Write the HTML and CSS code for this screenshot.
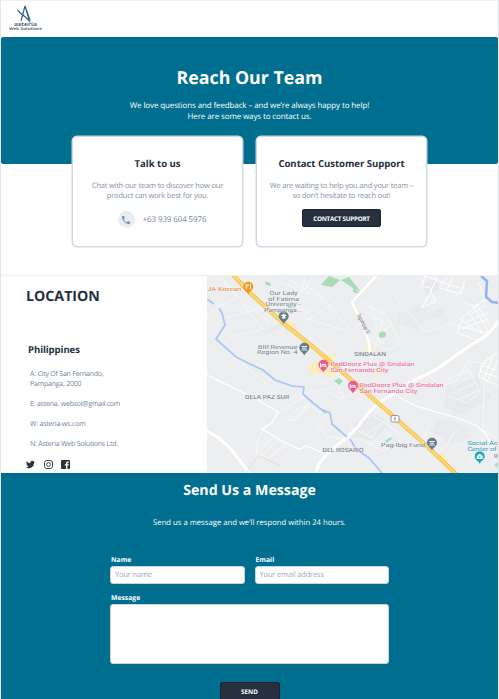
FILE: index.html
```html
<!DOCTYPE html>
<html lang="en">
<head>
<meta charset="utf-8">
<title>Asteria Web Solutions – Contact</title>
<link rel="stylesheet" href="styles.css">
</head>
<body>
<header class="topbar">
  <svg class="logo" width="34" height="27" viewBox="0 0 34 27">
    <path d="M16 1 12 16M16 1l4.500 15-7.500-7M8.500 5l6 6" fill="none" stroke="#2f6385" stroke-width="1.200"/>
    <path d="M17 2l5 14-3-4z" fill="#3b6686"/>
    <text x="5" y="21" font-size="5.500" font-weight="600" textLength="23" lengthAdjust="spacingAndGlyphs">asteria</text>
    <text x="0" y="25.300" font-size="4" font-weight="600" textLength="33" lengthAdjust="spacingAndGlyphs">Web Solutions</text>
  </svg>
</header>
<main>
  <section class="hero">
    <h1>Reach Our Team</h1>
    <p>We love questions and feedback – and we’re always happy to help!<br>Here are some ways to contact us.</p>
  </section>
  <section class="cards">
    <article class="card">
      <h2>Talk to us</h2>
      <p>Chat with our team to discover how our<br>product can work best for you.</p>
      <div class="phone">
        <span class="phone-icon"><svg width="10" height="10" viewBox="3 3 18 18"><path fill="#7c93aa" d="M6.620 10.790c1.440 2.830 3.760 5.140 6.590 6.590l2.200-2.200c.27-.27.67-.36 1.020-.24 1.120.37 2.330.57 3.570.57.550 0 1 .45 1 1V20c0 .55-.45 1-1 1-9.390 0-17-7.610-17-17 0-.55.45-1 1-1h3.500c.55 0 1 .45 1 1 0 1.250.2 2.450.57 3.570.11.350.03.740-.25 1.020z"/></svg></span>
        <span>+63 939 604 5976</span>
      </div>
    </article>
    <article class="card">
      <h2>Contact Customer Support</h2>
      <p>We are waiting to help you and your team –<br>so don’t hesitate to reach out!</p>
      <button class="btn support">CONTACT SUPPORT</button>
    </article>
  </section>
  <section class="location">
    <div class="info">
      <h2>LOCATION</h2>
      <h3>Philippines</h3>
      <address>
        <p>A: City Of San Fernando,<br>Pampanga, 2000</p>
        <p>E: asteria. websol@gmail.com</p>
        <p>W: asteria-ws.com</p>
        <p>N: Asteria Web Solutions Ltd.</p>
      </address>
      <div class="social">
        <svg width="9" height="9" viewBox="0 2 24 20"><path fill="#243342" d="M24 4.600a10 10 0 0 1-2.800.8 5 5 0 0 0 2.100-2.700 10 10 0 0 1-3.100 1.200 4.900 4.900 0 0 0-8.400 4.500A14 14 0 0 1 1.700 3.200a4.900 4.900 0 0 0 1.500 6.500 5 5 0 0 1-2.200-.6 4.900 4.900 0 0 0 4 4.900 5 5 0 0 1-2.300.1 4.900 4.900 0 0 0 4.600 3.400A10 10 0 0 1 0 19.500 14 14 0 0 0 21.500 7.100 10 10 0 0 0 24 4.600z"/></svg>
        <svg width="9" height="9" viewBox="0 0 9 9" fill="none" stroke="#243342"><rect x=".5" y=".5" width="8" height="8" rx="2.300" stroke-width=".9"/><circle cx="4.500" cy="4.500" r="1.900" stroke-width=".9"/><circle cx="6.900" cy="2.100" r=".4" fill="#243342" stroke="none"/></svg>
        <svg width="9" height="9" viewBox="0 0 9 9"><path fill="#243342" d="M1 0h7a1 1 0 0 1 1 1v7a1 1 0 0 1-1 1H6.400V5.600h1.200l.2-1.400H6.400v-.8c0-.5.200-.7.700-.7h.7V1.500h-1C5.500 1.500 5 2.200 5 3.200v1H3.800v1.400H5V9H1a1 1 0 0 1-1-1V1a1 1 0 0 1 1-1z"/></svg>
      </div>
    </div>
    <svg class="map" width="291" height="197" viewBox="207 276 291 197">
      <defs>
        <path id="pin" d="M0 6.500C-1 3.500-5 2.500-5-1.200a5 5 0 0 1 10 0C5 2.500 1 3.500 0 6.500z"/>
      </defs>
      <rect x="207" y="276" width="292" height="197" fill="#eceef0"/>
      <g fill="#e7e9ec">
        <path d="M262 331l24-11 4 4-24 11zM284 328l12-4 3 5-12 5zM398 315l20-9 12 7 16-8-6 12-15 4-9 9-18-7zM421 285l14-6 7 9-14 8zM355 423l22-9 15 12-18 15-22-4zM447 385l30-8 14 20-30 18-17-9zM438 418l22 5 12 15-22 6-18-13z"/>
      </g>
      <g fill="#a9dbb9">
        <path d="M329 276l11 4-8 7-11-2zM341 280l8-3 12 15-8-4zM353 287l7 7-7-2z"/>
        <ellipse cx="381.500" cy="334.500" rx="4.500" ry="3.300"/>
        <path d="M334 381l5-3 4 3-4 4zM265 281l5 2 1 3-5-1zM287 305l5-1v4h-4zM385 441l6-4 1 2-6 4zM494 465l5-3v6z"/>
      </g>
      <g fill="#fbeebd">
        <path d="M286 318l9 6 2 6-8-1zM309 365l16-8 14 12-5 9-13-4-12-1zM328 352l9 5-4 6-7-4zM354 309l6 3 2 8-6-3zM366 345l8-1v8l-7-1zM438 457l5-5 7 12-4 4zM374 371l12-3-8 9z"/>
      </g>
      <g fill="none" stroke="#f9fafb" stroke-width=".8">
        <path d="M270 287l20 13 16-13M277 280l24 11 5-15M282 276l23 13-13 14 15 10 17-16-19-12M294 304l14 16 28-18M306 291l11 5M313 276l-8 13M219 276l26 28 25 18M207 314l30-17-12-15M222 319l52-15M229 337l34-8-20-24M310 320l34 10M318 294l34 37 12-11M297 350l14-12 41 36M228 352l46 38M322 384l32-22"/>
        <path d="M360 301l26 14 15 29-15 6-20-12M366 312l18 10M372 307l8 36M384 318l-8 23M390 326l-19 12M376 276l20 21 29 35 29-9"/>
        <path stroke="#fff" stroke-width="1" d="M425 276l-3 10 8 2 5 14-13 5M437 278l-11 23M437 301l-7-8-8 14M425 276l34 12M447 276l-8 12 22 6 4-14M453 276l-6 14M465 286l-9 10M478 281l7 18-22 18-6 16 22 8 9-10-15-25M476 304l14 21M467 310l15 22M460 319l23 15M463 302l11 4 16-7M454 325l32 8M472 314l13-9M466 322l22-9M462 329l26-10"/>
        <path stroke="#fff" stroke-width="1" d="M499 351l-18 14-2 12 20 9M488 357l-8 14 19 7M494 353l-10 26M499 359l-13 24M481 365l18 6"/>
        <path d="M263 430l-5 9-2 14M256 454l18-17 12 9-18 13M260 457l19-18M265 460l20-16M287 419l14-13 6 2-12 13zM291 421l14-13M298 417l12-11M278 413l32-21 23-4M312 407l8 7M340 376l9 12 9-4M336 383l8 16 14-8M330 393l12 6M317 423l10 14 12 1"/>
        <path d="M350 426l21 12 14-18 17 20-19 11-22-12M360 440l21-17M369 446l20-20M362 431l27 17M374 416l25 17M412 380l14-6 15 12 16-5 11-20 20 3M431 424l-8 14 21 12 10-18M445 380l24-10 11 22-13 11-21-8M452 387l17-9M454 393l21-10M460 399l19-9M484 385l-1 45 16 10M487 430l-19 37"/>
      </g>
      <g fill="none" stroke="#fff" stroke-linecap="round">
        <path stroke-width="1.300" d="M207 375l49 24 22 13-6 11-10 6 20 12 17 8 8-3 20 9M397 396l18 10 40 11 22 9 10 9 6 17"/>
        <path stroke-width="2.500" d="M377 275l-25 27 9 20c6 13 9 19 9 34v12"/>
        <path stroke-width="3" d="M207 431c20 10 27 22 42 42"/>
        <path stroke-width="3.200" d="M316 473c2-11 8-16 17-24l20-17c12-13 13-19 26-29l31-20c12-8 24-10 35-20l26-18c15-8 21-14 28-25"/>
      </g>
      <path d="M246 473l12-17 22 9" fill="none" stroke="#eedadc"/>
      <g fill="none" stroke="#a9c5f5" stroke-width="1.700" stroke-linejoin="round">
        <path d="M207 299l7 5M219 308l3 5 3 12-9 14 10 9 10 9 14 7 13 6 12 10 17 6 12 1-1 7 10 9 13 10M321 409l9 4 2 11 15 13M350 439l6 10 13 9 13 15"/>
        <path stroke-width="2.500" stroke="#8db4f7" d="M481 276l6 5-1 16 6 5 7 1"/>
      </g>
      <path d="M233 275l17 18 33 30 29 23 36 31 45 39 36 32 28 27" fill="none" stroke="#f5bf45" stroke-width="4.200"/>
      <path d="M233 275l17 18 33 30 29 23 36 31 45 39 36 32 28 27" fill="none" stroke="#ffd772" stroke-width="2.400"/>
      <rect x="391" y="415.500" width="8" height="6.500" rx="1.500" fill="#fff" stroke="#777d84" stroke-width=".8"/>
      <path d="M395 417v3.500" stroke="#555" stroke-width=".8"/>
      <g>
        <use href="#pin" x="248.300" y="288" fill="#f29a1f"/>
        <path d="M246.500 284v5M248 284v2h-3M250.500 284v5" stroke="#fff" stroke-width=".9" fill="none"/>
        <use href="#pin" x="283.700" y="317.500" fill="#647b8c"/>
        <path d="M280.500 315.500l3.200-1.700 3.200 1.700-3.200 1.800zM282 317v1.500h3.500V317" fill="#fff"/>
        <use href="#pin" x="304.300" y="349" fill="#647b8c"/>
        <path d="M301.500 346.500h5.600M302 348.200h4.600M301.500 350h5.600" stroke="#fff" stroke-width=".9"/>
        <use href="#pin" x="323.500" y="366" fill="#ee5a94"/>
        <path d="M320.700 363v4.500M320.700 366h5.600v1.500M322 364.500h4" stroke="#fff" fill="none"/>
        <use href="#pin" x="353" y="387" fill="#ee5a94"/>
        <path d="M350.200 384v4.500M350.200 387h5.600v1.500M351.500 385.500h4" stroke="#fff" fill="none"/>
        <use href="#pin" x="432" y="444" fill="#647b8c"/>
        <path d="M429.300 441.500h5.400M430 443.200h4M429.300 445h5.400" stroke="#fff" stroke-width=".9"/>
        <use href="#pin" x="479.700" y="457.500" fill="#19acc0"/>
        <path d="M476.800 456l3-2.300 2.900 2.300v3h-5.800z" fill="#fff"/>
        <circle cx="479.700" cy="457" r=".8" fill="#19acc0"/>
      </g>
      <g class="labels">
        <g fill="#e98b38"><text x="207.300" y="291" textLength="34" lengthAdjust="spacingAndGlyphs">JA Korean</text></g>
        <g fill="#74808c">
          <text x="269.500" y="294.500" textLength="28" lengthAdjust="spacingAndGlyphs">Our Lady</text>
          <text x="268" y="300.500" textLength="31" lengthAdjust="spacingAndGlyphs">of Fatima</text>
          <text x="265.500" y="306" textLength="35" lengthAdjust="spacingAndGlyphs">University -</text>
          <text x="264" y="311.500" textLength="38" lengthAdjust="spacingAndGlyphs">Pampanga...</text>
          <text x="258" y="348.500" textLength="39.500" lengthAdjust="spacingAndGlyphs">BIR Revenue</text>
          <text x="257" y="354" textLength="40.500" lengthAdjust="spacingAndGlyphs">Region No. 4</text>
          <text x="381" y="446.500" textLength="44" lengthAdjust="spacingAndGlyphs">Pag-Ibig Fund</text>
        </g>
        <g fill="#ec5c91">
          <text x="330.500" y="366" textLength="84" lengthAdjust="spacingAndGlyphs">RedDoorz Plus @ Sindalan</text>
          <text x="330.500" y="371.500" textLength="58" lengthAdjust="spacingAndGlyphs">San Fernando City</text>
          <text x="359.500" y="387" textLength="84" lengthAdjust="spacingAndGlyphs">RedDoorz Plus @ Sindalan</text>
          <text x="359.500" y="392.500" textLength="58" lengthAdjust="spacingAndGlyphs">San Fernando City</text>
        </g>
        <g fill="#686e74">
          <text x="354" y="356" textLength="32" lengthAdjust="spacingAndGlyphs">SINDALAN</text>
          <text x="245" y="398.500" textLength="44" lengthAdjust="spacingAndGlyphs">DELA PAZ SUR</text>
          <text x="322.500" y="451.500" textLength="41" lengthAdjust="spacingAndGlyphs">DEL ROSARIO</text>
          <text x="494" y="458">R</text>
          <text transform="translate(356.500 315) rotate(62)" font-size="4.500" textLength="22" lengthAdjust="spacingAndGlyphs">Tagumpay St</text>
        </g>
        <g fill="#269fae">
          <text x="467.500" y="445" textLength="30" lengthAdjust="spacingAndGlyphs">Social Ac</text>
          <text x="467.500" y="451" textLength="29" lengthAdjust="spacingAndGlyphs">Center of</text>
        </g>
      </g>
    </svg>
  </section>
  <section class="message">
    <h2>Send Us a Message</h2>
    <p>Send us a message and we’ll respond within 24 hours.</p>
    <form>
      <label>Name<input type="text" placeholder="Your name"></label>
      <label>Email<input type="text" placeholder="Your email address"></label>
      <label class="wide">Message<textarea></textarea></label>
      <button class="btn send" type="button">SEND</button>
    </form>
  </section>
</main>
</body>
</html>
```
FILE: styles.css
```css
* { box-sizing: border-box; }
html { overflow: hidden; }
body {
  margin: 0;
  height: 699px;
  overflow: hidden;
  border: 1px solid #e4e6e8;
  border-top-color: #f0f0f0;
  border-bottom: 0;
  background: #fff;
  color: #243040;
  font-family: "Open Sans", sans-serif;
  text-rendering: geometricPrecision;
}
h1, h2, h3, p { margin: 0; }
.topbar { height: 36px; padding: 4px 0 0 8px; }
.logo { display: block; fill: #3c4d5f; }
.hero {
  height: 127px;
  padding-top: 29px;
  background: #006e8e;
  border-radius: 2px;
  color: #fff;
  text-align: center;
}
.hero h1 { font-size: 17.800px; line-height: 24px; font-weight: 700; }
.hero p { margin-top: 10px; font-size: 8px; line-height: 11px; letter-spacing: -.12px; }
.cards {
  display: flex;
  justify-content: center;
  gap: 13px;
  margin-top: -28px;
}
.card {
  width: 171px;
  height: 111px;
  padding-top: 19px;
  border: 1.500px solid #cfd8e5;
  border-radius: 5px;
  background: #fff;
  text-align: center;
  box-shadow: 0 0 0 .5px #cfd8e5;
}
.card h2 { font-size: 9.600px; line-height: 15px; font-weight: 700; letter-spacing: -.05px; }
.card p { margin-top: 10px; font-size: 7.500px; line-height: 10px; letter-spacing: -.19px; color: #8392a5; }
.phone {
  display: flex;
  align-items: center;
  justify-content: center;
  gap: 8px;
  margin-top: 10px;
  padding-left: 9px;
  font-size: 8px;
  letter-spacing: -.12px;
  color: #74859a;
}
.phone-icon {
  display: grid;
  place-items: center;
  width: 17px;
  height: 17px;
  border-radius: 50%;
  background: #e9edf3;
}
.phone-icon svg { width: 8px; height: 8px; }
.btn {
  display: block;
  padding: 0;
  border: 1px solid #1b2533;
  border-radius: 2px;
  background: #27303e;
  color: #fff;
  font: 700 6.300px "Open Sans", sans-serif;
  text-rendering: inherit;
}
.support { width: 79px; height: 18px; margin: 8px auto 0; letter-spacing: -.26px; }
.location {
  display: flex;
  height: 198px;
  margin-top: 28px;
  border-top: 1px solid #eceff1;
}
.info { width: 206px; padding: 11px 0 0 25px; }
.info h2 { font-size: 14.200px; line-height: 20px; font-weight: 700; }
.info h3 { margin: 36px 0 0 2px; font-size: 9.600px; line-height: 14px; font-weight: 700; letter-spacing: -.1px; }
address { margin: 13px 0 0 4px; font-style: normal; font-size: 7px; line-height: 10px; letter-spacing: -.22px; color: #71839a; }
address p + p { margin-top: 10px; }
.social { display: flex; gap: 8.500px; margin-top: 10px; }
.map { display: block; flex: none; }
.labels text { font-family: Roboto, sans-serif; font-size: 5.800px; stroke: #f4f5f6; stroke-width: .6px; paint-order: stroke; }
.message { height: 226px; padding-top: 7px; background: #006e8e; color: #fff; text-align: center; }
.message h2 { font-size: 14.200px; line-height: 22px; font-weight: 700; }
.message p { margin-top: 15px; font-size: 7.700px; line-height: 12px; }
form {
  display: grid;
  grid-template-columns: 134.500px 134.500px;
  column-gap: 10px;
  width: 279px;
  margin: 25px auto 0;
  text-align: left;
}
label { display: block; font-size: 6.800px; line-height: 12px; font-weight: 700; text-indent: 1px; }
input, textarea {
  display: block;
  width: 100%;
  height: 18px;
  margin-top: 0;
  padding: 0 4px;
  border: 1px solid #c8d5e2;
  border-radius: 3px;
  background: #fff;
  font: 7.500px "Open Sans", sans-serif;
  letter-spacing: -.15px;
  text-rendering: inherit;
  resize: none;
}
input::placeholder { color: #a0aab8; opacity: 1; }
.wide { grid-column: 1 / -1; margin-top: 8px; }
textarea { height: 60px; }
.send { grid-column: 1 / -1; justify-self: center; width: 60px; height: 18px; margin-top: 18px; }
```
